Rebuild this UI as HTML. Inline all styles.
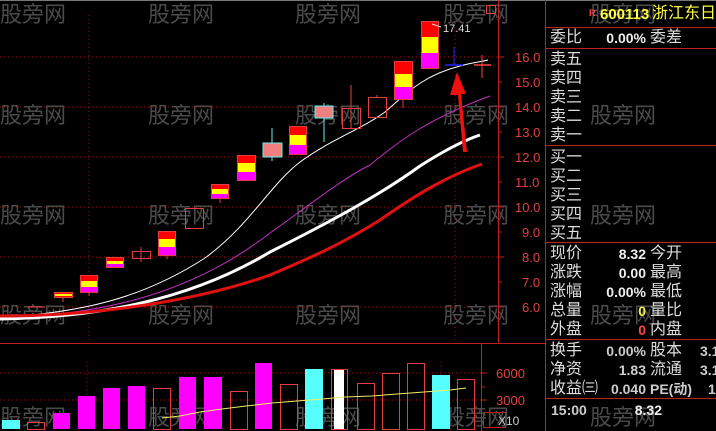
<!DOCTYPE html><html><head><meta charset="utf-8"><style>
body{margin:0;width:716px;height:431px;background:#000;overflow:hidden;position:relative;font-family:"Liberation Sans","Noto Sans CJK SC",sans-serif}
.p{position:absolute;font-size:16px;color:#ddd;white-space:nowrap;line-height:18px}
.v{position:absolute;font-size:14px;color:#eee;font-weight:bold;text-align:right;line-height:18px}
</style></head><body>
<svg width="716" height="431" style="position:absolute;left:0;top:0" font-family="Liberation Sans, Noto Sans CJK SC, sans-serif">
<line x1="0" y1="0.5" x2="716" y2="0.5" stroke="#777"/>
<g stroke="#a01010" stroke-dasharray="1 3">
<line x1="0" y1="57" x2="498" y2="57"/><line x1="0" y1="107" x2="498" y2="107"/><line x1="0" y1="157" x2="498" y2="157"/><line x1="0" y1="207" x2="498" y2="207"/><line x1="0" y1="257" x2="498" y2="257"/><line x1="0" y1="307" x2="498" y2="307"/>
<line x1="89" y1="15" x2="89" y2="340"/><line x1="455" y1="15" x2="455" y2="340"/>
<line x1="0" y1="373" x2="481" y2="373"/><line x1="0" y1="400" x2="481" y2="400"/>
<line x1="87" y1="362" x2="87" y2="428"/><line x1="441" y1="362" x2="441" y2="428"/>
</g>
<g fill="#4a4a4a" font-size="22">
<text x="0" y="22">股旁网</text><text x="148" y="22">股旁网</text><text x="295" y="22">股旁网</text><text x="443" y="22">股旁网</text><text x="590" y="22">股旁网</text>
<text x="0" y="123">股旁网</text><text x="148" y="123">股旁网</text><text x="295" y="123">股旁网</text><text x="443" y="123">股旁网</text><text x="590" y="123">股旁网</text>
<text x="0" y="223">股旁网</text><text x="148" y="223">股旁网</text><text x="295" y="223">股旁网</text><text x="443" y="223">股旁网</text><text x="590" y="223">股旁网</text>
<text x="0" y="323">股旁网</text><text x="148" y="323">股旁网</text><text x="295" y="323">股旁网</text><text x="443" y="323">股旁网</text><text x="590" y="323">股旁网</text>
<text x="0" y="425">股旁网</text><text x="148" y="425">股旁网</text><text x="295" y="425">股旁网</text><text x="443" y="425">股旁网</text><text x="590" y="425">股旁网</text>
</g>
<!-- MAs -->
<path d="M0,318 C80,312 140,300 205,258 C250,225 270,185 300,162 C330,140 360,130 385,112 C410,90 425,75 460,66 C470,63 480,62 488,60" stroke="#fff" fill="none" stroke-width="1"/>
<path d="M0,318 C100,315 190,295 270,233 C310,205 340,180 370,165 C400,140 430,118 490,96" stroke="#c030c0" fill="none" stroke-width="1"/>
<path d="M0,319 C100,317 190,300 270,252 C330,222 380,195 420,166 C445,150 465,140 480,135" stroke="#fff" fill="none" stroke-width="3"/>
<path d="M0,316 C100,316 200,300 270,275 C310,258 340,245 380,220 C420,192 450,175 482,164" stroke="#e01010" fill="none" stroke-width="3"/>
<!-- candles -->
<line x1="28" y1="307" x2="45" y2="307" stroke="#f44" />
<g stroke="#e04040">
<line x1="63" y1="297" x2="63" y2="302"/><line x1="89" y1="292" x2="89" y2="296"/><line x1="141" y1="247" x2="141" y2="262"/><line x1="167" y1="255" x2="167" y2="259"/><line x1="220" y1="198" x2="220" y2="203"/>
<line x1="351" y1="85" x2="351" y2="128"/><line x1="377" y1="95" x2="377" y2="97"/><line x1="403" y1="99" x2="403" y2="108"/>
</g>
<g id="c">
<rect x="54" y="292" width="19" height="5" fill="#f00"/><rect x="54" y="294" width="19" height="2" fill="#ff0"/>
<rect x="80" y="275" width="18" height="17" fill="#f00"/><rect x="80" y="281" width="18" height="6" fill="#ff0"/><rect x="80" y="287" width="18" height="5" fill="#f0f"/>
<rect x="106" y="257" width="18" height="10" fill="#f00"/><rect x="106" y="261" width="18" height="3" fill="#ff0"/><rect x="106" y="264" width="18" height="3" fill="#f0f"/>
<rect x="158" y="231" width="18" height="24" fill="#f00"/><rect x="158" y="239" width="18" height="8" fill="#ff0"/><rect x="158" y="247" width="18" height="8" fill="#f0f"/>
<rect x="211" y="184" width="18" height="14" fill="#f00"/><rect x="211" y="189" width="18" height="5" fill="#ff0"/><rect x="211" y="194" width="18" height="4" fill="#f0f"/>
<rect x="237" y="155" width="19" height="25" fill="#f00"/><rect x="237" y="163" width="19" height="9" fill="#ff0"/><rect x="237" y="172" width="19" height="8" fill="#f0f"/>
<rect x="289" y="126" width="18" height="28" fill="#f00"/><rect x="289" y="135" width="18" height="10" fill="#ff0"/><rect x="289" y="145" width="18" height="9" fill="#f0f"/>
<rect x="394" y="61" width="19" height="38" fill="#f00"/><rect x="394" y="74" width="19" height="13" fill="#ff0"/><rect x="394" y="87" width="19" height="12" fill="#f0f"/>
<rect x="421" y="21" width="18" height="47" fill="#f00"/><rect x="421" y="37" width="18" height="16" fill="#ff0"/><rect x="421" y="53" width="18" height="15" fill="#f0f"/>
</g>
<g fill="none" stroke="#e04040">
<rect x="132.5" y="251.5" width="18" height="7"/><rect x="185.5" y="208.5" width="18" height="20"/><rect x="342.5" y="108.5" width="18" height="20"/><rect x="368.5" y="97.5" width="18" height="20"/><rect x="486.5" y="5.5" width="9" height="8"/>
<rect x="54.5" y="292.5" width="18" height="5"/><rect x="80.5" y="275.5" width="17" height="17"/><rect x="106.5" y="257.5" width="17" height="10"/><rect x="158.5" y="231.5" width="17" height="24"/><rect x="211.5" y="184.5" width="17" height="14"/><rect x="237.5" y="155.5" width="18" height="25"/><rect x="289.5" y="126.5" width="17" height="28"/><rect x="394.5" y="61.5" width="18" height="38"/><rect x="421.5" y="21.5" width="17" height="47"/>
</g>
<line x1="272" y1="128" x2="272" y2="161" stroke="#6ee"/><line x1="324" y1="103" x2="324" y2="142" stroke="#6ee"/>
<rect x="263" y="143" width="19" height="14" fill="#f08080" stroke="#6ee"/><rect x="315" y="106" width="18" height="12" fill="#f08080" stroke="#6ee"/>
<line x1="445" y1="65" x2="463" y2="65" stroke="#22f" stroke-width="1.5"/><line x1="454" y1="47" x2="454" y2="65" stroke="#22f"/>
<line x1="474" y1="65" x2="491" y2="65" stroke="#f44" stroke-width="1.5"/><line x1="482" y1="55" x2="482" y2="78" stroke="#f44"/>
<text x="443" y="32" fill="#ddd" font-size="11">17.41</text><path d="M432,24 L441,27" stroke="#ddd"/>
<path d="M463,152 L458,95 L450,95 L457,72 L466,94 L461,94 L467,152Z" fill="#f01010"/>
<!-- axis -->
<line x1="498.5" y1="0" x2="498.5" y2="343" stroke="#c02020"/>
<g stroke="#c02020"><line x1="498" y1="57" x2="504" y2="57"/><line x1="498" y1="82" x2="502" y2="82"/><line x1="498" y1="107" x2="504" y2="107"/><line x1="498" y1="132" x2="502" y2="132"/><line x1="498" y1="157" x2="504" y2="157"/><line x1="498" y1="182" x2="502" y2="182"/><line x1="498" y1="207" x2="504" y2="207"/><line x1="498" y1="232" x2="502" y2="232"/><line x1="498" y1="257" x2="504" y2="257"/><line x1="498" y1="282" x2="502" y2="282"/><line x1="498" y1="307" x2="504" y2="307"/></g>
<g fill="#e04040" font-size="13">
<text x="515" y="62">16.0</text><text x="515" y="87">15.0</text><text x="515" y="112">14.0</text><text x="515" y="137">13.0</text><text x="515" y="162">12.0</text><text x="515" y="187">11.0</text><text x="515" y="212">10.0</text><text x="522" y="237">9.0</text><text x="522" y="262">8.0</text><text x="522" y="287">7.0</text><text x="522" y="312">6.0</text>
<text x="496" y="378">6000</text><text x="496" y="405">3000</text><text x="498" y="425" fill="#ccc" font-size="12">X10</text>
</g>
<rect x="483.5" y="412.5" width="22" height="15" fill="none" stroke="#c02020"/>
<line x1="0" y1="343.5" x2="545" y2="343.5" stroke="#c02020"/>
<line x1="481.5" y1="343" x2="481.5" y2="431" stroke="#c02020"/>
<g stroke="#c02020"><line x1="481" y1="373" x2="487" y2="373"/><line x1="481" y1="387" x2="485" y2="387"/><line x1="481" y1="400" x2="487" y2="400"/></g>
<!-- volume -->
<g fill="#f0f"><rect x="53" y="413" width="17" height="16"/><rect x="78" y="396" width="17" height="33"/><rect x="103" y="388" width="17" height="41"/><rect x="128" y="386" width="17" height="43"/><rect x="179" y="377" width="17" height="52"/><rect x="204" y="377" width="18" height="52"/><rect x="255" y="363" width="17" height="66"/></g>
<g fill="#5ff"><rect x="2" y="420" width="18" height="9"/><rect x="305" y="369" width="18" height="60"/><rect x="432" y="375" width="18" height="54"/></g>
<g fill="none" stroke="#e04040"><rect x="27.5" y="422.5" width="17" height="7"/><rect x="153.5" y="388.5" width="17" height="41"/><rect x="230.5" y="391.5" width="17" height="38"/><rect x="280.5" y="384.5" width="17" height="45"/><rect x="331.5" y="369.5" width="16" height="60"/><rect x="357.5" y="383.5" width="17" height="46"/><rect x="382.5" y="373.5" width="17" height="56"/><rect x="407.5" y="363.5" width="17" height="66"/><rect x="457.5" y="379.5" width="17" height="50"/></g>
<rect x="334" y="370" width="10" height="59" fill="#fff"/>
<path d="M162,418 L180,416 L200,412 L222,409 L246,406 L272,403 L297,401 L322,399 L345,397 L372,396 L397,394 L424,392 L450,390 L466,388" stroke="#ee6" fill="none"/>
<!-- right panel lines -->
<g stroke="#c02020"><line x1="545.5" y1="0" x2="545.5" y2="431"/><line x1="545" y1="27.5" x2="716" y2="27.5"/><line x1="545" y1="48.5" x2="716" y2="48.5"/><line x1="545" y1="145.5" x2="716" y2="145.5"/><line x1="545" y1="242.5" x2="716" y2="242.5"/><line x1="545" y1="339.5" x2="716" y2="339.5"/><line x1="545" y1="398.5" x2="716" y2="398.5"/></g>
</svg>
<div class="p" style="left:589px;top:4px;color:#f44;font-size:9px;font-weight:bold">R</div>
<div class="p" style="left:600px;top:6px;color:#ff4;font-weight:bold;font-size:15px">600113</div>
<div class="p" style="left:652px;top:5px;color:#ff4">浙江东日</div>
<div class="p" style="left:550px;top:29px">委比</div><div class="v" style="left:600px;width:46px;top:29px">0.00%</div><div class="p" style="left:650px;top:29px">委差</div>
<div class="p" style="left:550px;top:51px">卖五</div><div class="p" style="left:550px;top:70px">卖四</div><div class="p" style="left:550px;top:89px">卖三</div><div class="p" style="left:550px;top:108px">卖二</div><div class="p" style="left:550px;top:127px">卖一</div>
<div class="p" style="left:550px;top:149px">买一</div><div class="p" style="left:550px;top:168px">买二</div><div class="p" style="left:550px;top:187px">买三</div><div class="p" style="left:550px;top:206px">买四</div><div class="p" style="left:550px;top:225px">买五</div>
<div class="p" style="left:550px;top:245px">现价</div><div class="v" style="left:600px;width:46px;top:245px">8.32</div><div class="p" style="left:650px;top:245px">今开</div>
<div class="p" style="left:550px;top:264px">涨跌</div><div class="v" style="left:600px;width:46px;top:264px">0.00</div><div class="p" style="left:650px;top:264px">最高</div>
<div class="p" style="left:550px;top:283px">涨幅</div><div class="v" style="left:600px;width:46px;top:283px">0.00%</div><div class="p" style="left:650px;top:283px">最低</div>
<div class="p" style="left:550px;top:302px">总量</div><div class="v" style="left:600px;width:46px;top:302px;color:#ee4">0</div><div class="p" style="left:650px;top:302px">量比</div>
<div class="p" style="left:550px;top:321px">外盘</div><div class="v" style="left:600px;width:46px;top:321px;color:#f44">0</div><div class="p" style="left:650px;top:321px">内盘</div>
<div class="p" style="left:550px;top:342px">换手</div><div class="v" style="left:600px;width:46px;top:342px;color:#ccc">0.00%</div><div class="p" style="left:650px;top:342px">股本</div><div class="v" style="left:700px;width:20px;top:342px;text-align:left;color:#ccc">3.1</div>
<div class="p" style="left:550px;top:361px">净资</div><div class="v" style="left:600px;width:46px;top:361px;color:#ccc">1.83</div><div class="p" style="left:650px;top:361px">流通</div><div class="v" style="left:700px;width:20px;top:361px;text-align:left;color:#ccc">3.1</div>
<div class="p" style="left:550px;top:380px">收益㈢</div><div class="v" style="left:600px;width:46px;top:380px;color:#ccc">0.040</div><div class="p" style="left:650px;top:380px;font-weight:bold;font-size:14px;color:#ccc">PE(动)</div><div class="v" style="left:708px;width:10px;top:380px;text-align:left;color:#ccc">1</div>
<div class="v" style="left:551px;top:401px;text-align:left;color:#ccc">15:00</div><div class="v" style="left:600px;width:62px;top:401px">8.32</div>
</body></html>
